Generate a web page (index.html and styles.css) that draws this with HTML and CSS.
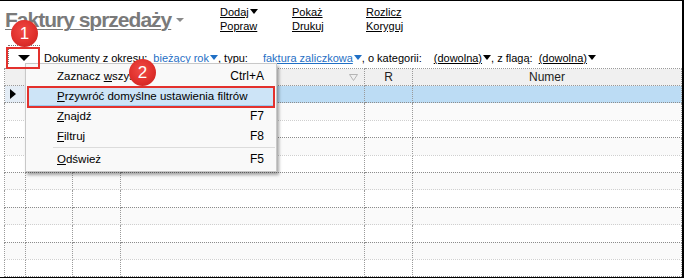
FILE: index.html
```html
<!DOCTYPE html>
<html lang="pl">
<head>
<meta charset="UTF-8" />
<title>Faktury sprzedaży</title>
<link rel="stylesheet" href="styles.css">
</head>
<body>

<div class="window">
  <!-- nagłówek z tytułem i akcjami -->
  <div class="top">
    <h1 class="title"><span class="title-text">Faktury sprzedaży</span><span class="title-caret"></span></h1>
    <div class="actions">
      <a>Dodaj<span class="tri"></span></a>
      <a>Pokaż</a>
      <a>Rozlicz</a>
      <a>Popraw</a>
      <a>Drukuj</a>
      <a>Koryguj</a>
    </div>
  </div>

  <!-- filtry -->
  <div class="filters">
    <div class="grid-btn"><span class="tri big"></span></div>
    <span class="lbl">Dokumenty z okresu:</span>
    <a class="val blue gap-a">bieżący rok<span class="tri blue"></span></a>
    <span class="lbl">, typu:</span>
    <a class="val blue gap-c">faktura zaliczkowa<span class="tri blue"></span></a>
    <span class="lbl">, o kategorii:</span>
    <a class="val gap-d">(dowolna)<span class="tri"></span></a>
    <span class="lbl">, z flagą:</span>
    <a class="val gap-f">(dowolna)<span class="tri"></span></a>
  </div>

  <!-- tabela dokumentów -->
  <table class="grid">
    <colgroup>
      <col class="c-ind"><col class="c-a"><col class="c-b"><col class="c-c"><col class="c-r"><col>
    </colgroup>
    <thead>
      <tr>
        <th></th><th></th><th></th>
        <th class="filt"><svg width="9" height="7" viewBox="0 0 9 7"><path d="M0.5 0.5 H8.5 L4.5 6.5 Z" fill="none" stroke="#b5b5b5" stroke-width="1"/></svg></th>
        <th>R</th><th>Numer</th>
      </tr>
    </thead>
    <tbody>
      <tr class="selected"><td class="ind"><span class="row-arrow"></span></td><td></td><td></td><td></td><td></td><td></td></tr>
      <tr><td class="ind"></td><td></td><td></td><td></td><td></td><td></td></tr>
      <tr><td class="ind"></td><td></td><td></td><td></td><td></td><td></td></tr>
      <tr><td class="ind"></td><td></td><td></td><td></td><td></td><td></td></tr>
      <tr><td class="ind"></td><td></td><td></td><td></td><td></td><td></td></tr>
      <tr><td class="ind"></td><td></td><td></td><td></td><td></td><td></td></tr>
      <tr><td class="ind"></td><td></td><td></td><td></td><td></td><td></td></tr>
      <tr><td class="ind"></td><td></td><td></td><td></td><td></td><td></td></tr>
      <tr><td class="ind"></td><td></td><td></td><td></td><td></td><td></td></tr>
      <tr><td class="ind"></td><td></td><td></td><td></td><td></td><td></td></tr>
      <tr><td class="ind"></td><td></td><td></td><td></td><td></td><td></td></tr>
    </tbody>
  </table>

  <!-- menu kontekstowe -->
  <div class="ctx-menu">
    <div class="item"><span>Zaznacz <u>w</u>szystko</span><span class="key">Ctrl+A</span></div>
    <div class="item hl"><span><u>P</u>rzywróć domyślne ustawienia filtrów</span><span class="key"></span></div>
    <div class="item"><span><u>Z</u>najdź</span><span class="key">F7</span></div>
    <div class="item"><span><u>F</u>iltruj</span><span class="key">F8</span></div>
    <div class="sep"></div>
    <div class="item"><span><u>O</u>dśwież</span><span class="key">F5</span></div>
  </div>

  <!-- oznaczenia instrukcji -->
  <div class="mark mark-btn"></div>
  <div class="mark mark-item"></div>
  <div class="badge badge-1">1</div>
  <div class="badge badge-2">2</div>
</div>

</body>
</html>
```

FILE: styles.css
```css
body {
  margin: 0;
  font-family: "Liberation Sans", Arial, sans-serif;
  font-size: 11px;
  background: #fff;
}
.window {
  position: relative;
  box-sizing: border-box;
  width: 684px;
  height: 278px;
  border-top: 1px solid #000;
  border-right: 2px solid #000;
  border-bottom: 1px solid #000;
  overflow: hidden;
  background: #fff;
}
/* nagłówek */
.top {
  display: flex;
  height: 40px;
}
.title {
  flex: 0 0 215px;
  margin: 6px 0 0 5px;
  font-size: 21px;
  line-height: 26px;
  font-weight: bold;
  color: #7a7a7a;
  letter-spacing: -1px;
  white-space: nowrap;
}
.title-text {
  text-decoration: underline;
  text-decoration-thickness: 1px;
  text-underline-offset: 2px;
}
.title-caret {
  display: inline-block;
  margin-left: 5px;
  vertical-align: 5px;
  border-left: 4px solid transparent;
  border-right: 4px solid transparent;
  border-top: 4px solid #8a8a8a;
}
.actions {
  display: grid;
  grid-template-columns: 72px 74px 60px;
  grid-auto-rows: 14px;
  padding-top: 4px;
  line-height: 14px;
}
.actions a {
  color: #000;
  text-decoration: underline;
  white-space: nowrap;
}
.tri {
  display: inline-block;
  margin-left: 1px;
  vertical-align: 2px;
  border-left: 4px solid transparent;
  border-right: 4px solid transparent;
  border-top: 5px solid #000;
}
.tri.blue {
  border-top-color: #1f6fc5;
}
/* filtry */
.filters {
  display: flex;
  align-items: flex-end;
  height: 27px;
  padding: 0 0 3px 8px;
  box-sizing: border-box;
  line-height: 14px;
  white-space: nowrap;
}
.grid-btn {
  box-sizing: border-box;
  width: 32px;
  height: 19px;
  margin: 0 4px 1px 0;
  border: 1px dotted #777;
  border-bottom: none;
  display: flex;
  justify-content: center;
  align-items: flex-end;
  padding-bottom: 3px;
}
.tri.big {
  margin: 0;
  border-left-width: 6px;
  border-right-width: 6px;
  border-top-width: 6px;
}
.lbl {
  color: #000;
}
.val {
  color: #000;
  text-decoration: underline;
}
.val.blue {
  color: #1f6fc5;
}
.gap-a { margin-left: 6px; }
.gap-c { margin-left: 15px; }
.gap-d { margin-left: 12px; }
.gap-f { margin-left: 6px; }
/* tabela */
.grid {
  margin-left: 4px;
  width: 678px;
  border-collapse: collapse;
  table-layout: fixed;
}
.c-ind { width: 21px; }
.c-a { width: 47px; }
.c-b { width: 48px; }
.c-c { width: 244px; }
.c-r { width: 48px; }
.grid th,
.grid td {
  padding: 0;
  border-left: 1px dotted #9a9a9a;
  border-right: 1px dotted #9a9a9a;
}
.grid th {
  height: 16px;
  background: #f0f0f0;
  border-top: 1px dotted #9a9a9a;
  border-bottom: 1px dotted #9a9a9a;
  font-size: 12px;
  font-weight: normal;
  color: #222;
  line-height: 16px;
}
.grid th.filt {
  text-align: right;
  padding-right: 6px;
  vertical-align: middle;
}
.grid th.filt svg {
  display: block;
  margin-left: auto;
}
.grid td {
  height: 16.4px;
  border-bottom: 1px dotted #8c8c8c;
}
.grid tbody tr:nth-child(even) td {
  background: #fafafa;
  border-bottom-color: #cfcfcf;
}
.grid tr.selected td {
  background: #bcdcf4;
}
.grid tr.selected td.ind {
  background: #e3ecf5;
}
.row-arrow {
  display: block;
  margin-left: 5px;
  width: 0;
  height: 0;
  border-top: 5px solid transparent;
  border-bottom: 5px solid transparent;
  border-left: 6px solid #000;
}
/* menu kontekstowe */
.ctx-menu {
  position: absolute;
  left: 25px;
  top: 62px;
  width: 252px;
  box-sizing: border-box;
  padding: 2px 1px 2px 1px;
  background: #f9f9f9;
  border: 1px solid #c8c8c8;
  box-shadow: 2px 3px 3px rgba(0, 0, 0, 0.35);
  font-size: 11.5px;
}
.item {
  display: flex;
  justify-content: space-between;
  height: 20px;
  line-height: 20px;
  padding: 0 11px 0 30px;
  color: #000;
  white-space: nowrap;
}
.item .key {
  font-size: 12px;
}
.item.hl {
  background: #cde4f7;
  box-shadow: inset 0 0 0 1px #9cc8ec;
}
.sep {
  height: 1px;
  margin: 1px 0 1px 26px;
  background: #dcdcdc;
}
.mark {
  position: absolute;
  box-sizing: border-box;
  border: 2px solid #e3312d;
}
.mark-btn {
  left: 6px;
  top: 46px;
  width: 34px;
  height: 22px;
}
.mark-item {
  left: 27px;
  top: 85px;
  width: 248px;
  height: 22px;
}
.badge {
  position: absolute;
  width: 27px;
  height: 27px;
  border-radius: 50%;
  background: radial-gradient(circle at 45% 40%, #f04a45 0%, #e0302c 55%, #c2201d 100%);
  color: #fff;
  font-size: 17px;
  line-height: 27px;
  text-align: center;
}
.badge-1 {
  left: 11px;
  top: 19px;
}
.badge-2 {
  left: 129px;
  top: 58px;
}
```
